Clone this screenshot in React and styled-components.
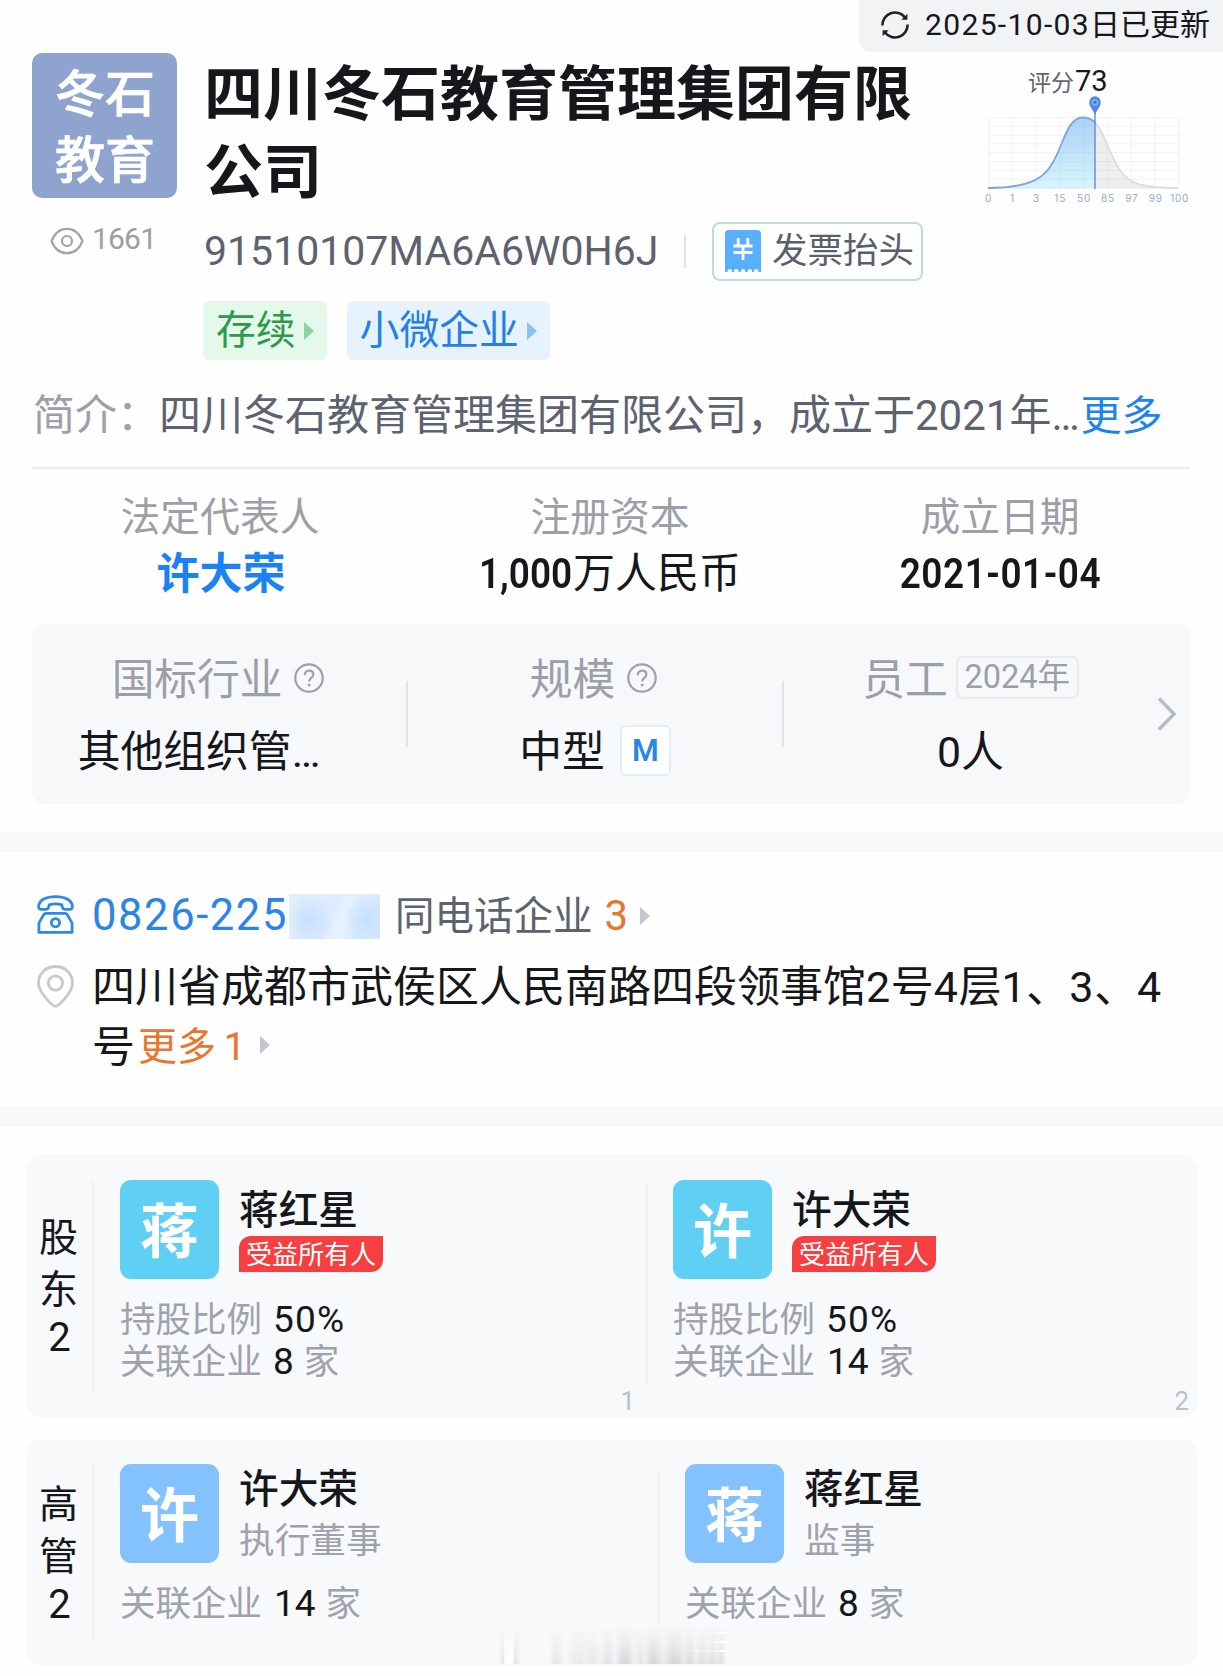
import React from "react";
import styled, { createGlobalStyle } from "styled-components";

const Global = createGlobalStyle`
  *, *::before, *::after { box-sizing: border-box; }
  body {
    margin: 0;
    background: #fff;
    color: #15171b;
    font-family: Roboto, "Noto Sans CJK SC", sans-serif;
  }
`;

const Page = styled.main`
  position: relative;
  width: 1223px;
  height: 1676px;
  overflow: hidden;
  background: #fefefe;
`;

/* ---------- header ---------- */

const TopBar = styled.div`
  display: flex;
  justify-content: flex-end;
  height: 52px;
`;

const UpdateBadge = styled.div`
  display: flex;
  align-items: center;
  gap: 16px;
  width: 364px;
  padding: 0 0 3px 22px;
  border-bottom-left-radius: 12px;
  background: #f2f3f5;
  font-size: 30px;
  line-height: 40px;
  white-space: nowrap;
`;

const Spaced = styled.span`
  letter-spacing: ${(p) => p.$by}px;
`;

const Header = styled.header`
  display: grid;
  grid-template-columns: 145px 1fr 232px;
  column-gap: 26px;
  height: 307px;
  margin: 1px 22px 0 32px;
`;

const Logo = styled.div`
  width: 145px;
  height: 145px;
  padding: 9px 0 0 1px;
  border-radius: 10px;
  background: #8fa3cf;
  color: #fff;
  font-size: 50px;
  font-weight: 500;
  line-height: 66px;
  text-align: center;
  -webkit-text-stroke: 0.7px #fff;
`;

const Views = styled.div`
  display: flex;
  align-items: center;
  gap: 8px;
  margin: 24px 0 0 18px;
  color: #9b9ea6;
  font-size: 30px;
  font-weight: 400;
  letter-spacing: -0.8px;
  line-height: 40px;
`;

const ViewCount = styled.span`
  margin-top: -3px;
`;

const Title = styled.h1`
  width: 720px;
  margin: 0;
  padding: 3px 0 0 1px;
  font-size: 59px;
  font-weight: 700;
  line-height: 78px;
`;

const CodeRow = styled.div`
  display: flex;
  align-items: center;
  height: 59px;
  margin-top: 10px;
`;

const Code = styled.span`
  width: 481px;
  padding: 0 0 2px 1px;
  color: #5d6270;
  font-size: 41px;
  line-height: 50px;
`;

const Rule = styled.i`
  width: 2px;
  height: ${(p) => p.$h}px;
  background: #e1e3e7;
`;

const InvoiceButton = styled.button`
  display: flex;
  align-items: center;
  gap: 11px;
  width: 211px;
  height: 59px;
  margin-left: 26px;
  padding: 0 0 1px 11px;
  border: 2px solid #bcdaec;
  border-radius: 8px;
  background: #fff;
  color: #5a5f6b;
  font: 400 35.5px/48px Roboto, "Noto Sans CJK SC", sans-serif;
  white-space: nowrap;
`;

const TagRow = styled.div`
  display: flex;
  gap: 20px;
  margin-top: 20px;
`;

const Tag = styled.span`
  display: flex;
  align-items: center;
  gap: 8px;
  height: 59px;
  padding: 0 13px 0 13px;
  border-radius: 6px;
  background: ${(p) => p.$bg};
  color: ${(p) => p.$color};
  font-size: 39.8px;
  line-height: 50px;
`;

const Score = styled.div`
  padding-top: 6px;
`;

const ScoreLabel = styled.div`
  display: flex;
  align-items: baseline;
  gap: 1px;
  height: 35px;
  padding-left: 59px;
  color: #5f6472;
  font-size: 23px;
  line-height: 44px;
`;

const ScoreValue = styled.b`
  color: #15171b;
  font-size: 29px;
  font-weight: 400;
`;

/* ---------- intro and stats ---------- */

const Intro = styled.p`
  box-sizing: content-box;
  height: 81px;
  margin: 0 33px 0 32px;
  padding: 26px 0 0 1px;
  border-bottom: 2px solid #ededf0;
  color: #5d6270;
  font-size: 42px;
  line-height: 60px;
  white-space: nowrap;
`;

const Muted = styled.span`
  color: #9c9fa9;
`;

const MoreLink = styled.span`
  margin-left: 1px;
  color: #1d83f0;
  font-size: 41px;
`;

const Stats = styled.section`
  display: grid;
  grid-template-columns: repeat(3, 1fr);
  height: 155px;
  margin: 0 28px 0 25px;
  padding-top: 24px;
  text-align: center;
`;

const StatLabel = styled.div`
  color: #9c9fa8;
  font-size: 39.8px;
  line-height: 50px;
`;

const StatValue = styled.div`
  margin-top: 3px;
  padding-left: ${(p) => (p.$link ? 2 : 0)}px;
  color: ${(p) => (p.$link ? "#1a82f2" : "#15171b")};
  font-size: ${(p) => (p.$link ? 43 : 42)}px;
  font-weight: ${(p) => (p.$link ? 700 : 400)};
  line-height: 56px;
  white-space: nowrap;
`;

const Figures = styled.span`
  display: inline-block;
  margin-right: ${(p) => p.$pull || 0}px;
  font-weight: 600;
  letter-spacing: ${(p) => p.$ls || 0}px;
  transform: scaleX(0.88);
  transform-origin: ${(p) => p.$origin || "left"} center;
`;

const Panel = styled.section`
  display: grid;
  grid-template-columns: 374px 2px 374px 2px 373px 1fr;
  align-items: center;
  height: 180px;
  margin: 0 33px 0 32px;
  border-radius: 12px;
  background: #f7f8fa;
`;

const PanelCell = styled.div`
  display: flex;
  flex-direction: column;
  align-items: center;
  gap: 20px;
  align-self: start;
  padding-top: 31px;
`;

const PanelLabel = styled.div`
  display: flex;
  align-items: center;
  gap: ${(p) => p.$gap}px;
  height: 50px;
  padding-right: ${(p) => p.$shift || 0}px;
  color: #9c9fa8;
  font-size: 42.7px;
  line-height: 50px;

  > svg { margin-bottom: 4px; }
`;

const PanelValue = styled.div`
  display: flex;
  align-items: center;
  gap: 15px;
  height: 56px;
  margin-top: -1px;
  padding-right: ${(p) => p.$shift || 0}px;
  font-size: 42.8px;
  line-height: 56px;
  white-space: nowrap;
`;

const YearTag = styled.span`
  width: 123px;
  height: 43px;
  margin-bottom: 5px;
  border: 2px solid #e9ebee;
  border-radius: 7px;
  font-size: 32.5px;
  line-height: 38px;
  text-align: center;
`;

const SizeBadge = styled.span`
  width: 51px;
  height: 51px;
  margin-bottom: 3px;
  border: 2px solid #e0eefb;
  border-radius: 6px;
  background: #fff;
  color: #2a86e8;
  font-size: 30.5px;
  font-weight: 600;
  line-height: 47px;
  text-align: center;
`;

const Band = styled.div`
  height: 20px;
  margin-top: ${(p) => p.$mt}px;
  background: #f7f8fa;
`;

/* ---------- contacts ---------- */

const Contacts = styled.section`
  height: 226px;
  padding: 34px 37px 0 37px;
`;

const PhoneRow = styled.div`
  display: flex;
  align-items: center;
  height: 60px;
  color: #5d6270;
  font-size: 39.5px;
  line-height: 60px;

  > svg:first-child { margin-bottom: 4px; }
`;

const PhoneNumber = styled.span`
  width: 197px;
  margin: -1px 0 0 18px;
  color: #2a85e6;
  font-size: 43.5px;
  letter-spacing: 1.6px;
`;

const HiddenDigits = styled.span`
  width: 91px;
  height: 45px;
  margin-right: 15px;
  background:
    radial-gradient(ellipse 24px 28px at 20px 26px, #c6dffd, transparent),
    radial-gradient(ellipse 24px 28px at 78px 26px, #c6dffd, transparent),
    linear-gradient(115deg, #e2effd 20%, #dcebfe 45%, #e6f2fe 58%, #d9eafe 80%);
`;

const SamePhone = styled.span`
  margin-top: 1px;
`;

const Orange = styled.span`
  color: #e8772e;
  font-size: ${(p) => p.$size}px;
  margin: ${(p) => p.$m};
  vertical-align: ${(p) => p.$lift || 0}px;
  word-spacing: ${(p) => p.$ws || 0}px;
`;

const AddressRow = styled.div`
  display: grid;
  grid-template-columns: 37px 1fr;
  column-gap: 18px;
  margin-top: 11px;
  font-size: 43px;
  line-height: 60px;

  > svg { margin-top: 8px; }
`;

const InlineArrow = styled.span`
  display: inline-block;
  margin-left: 14px;
  line-height: 0;
  vertical-align: 8px;
`;

/* ---------- people ---------- */

const Card = styled.section`
  display: grid;
  grid-template-columns: 66px 2px ${(p) => p.$first}px 2px 1fr;
  height: ${(p) => p.$h}px;
  margin: ${(p) => p.$mt}px 25px 0 26px;
  border-radius: 18px;
  background: #f7f9fb;
`;

const Side = styled.div`
  display: flex;
  flex-direction: column;
  align-items: center;
  justify-content: center;
  padding-right: 1px;
  font-size: 39px;
  line-height: 52px;
`;

const SideCount = styled.span`
  padding-left: 2px;
  font-size: 40px;
  line-height: 44px;
`;

const CardRule = styled.i`
  margin: ${(p) => p.$m};
  background: #eff1f4;
`;

const Person = styled.article`
  display: flex;
  flex-direction: column;
  padding: ${(p) => p.$p};
`;

const PersonTop = styled.div`
  display: flex;
  gap: 20px;
  height: 99px;
  margin-bottom: 20px;
`;

const Avatar = styled.div`
  width: 99px;
  height: 99px;
  border-radius: 11px;
  background: ${(p) => p.$bg};
  color: #fff;
  font-size: 59px;
  font-weight: 700;
  line-height: 105px;
  text-align: center;
`;

const Name = styled.div`
  margin-top: ${(p) => p.$mt}px;
  font-size: 39.7px;
  font-weight: 500;
  line-height: 48px;
`;

const OwnerTag = styled.div`
  width: 144px;
  height: 36px;
  margin-top: 1px;
  border-radius: 12px 0 12px 0;
  background: #f53f40;
  color: #fff;
  font-size: 26px;
  line-height: 39px;
  text-align: center;
`;

const Role = styled.div`
  margin-top: 4px;
  color: #9fa2ae;
  font-size: 35.7px;
  line-height: 46px;
`;

const Fact = styled.div`
  color: #9fa2ae;
  font-size: 35.5px;
  line-height: 42px;
`;

const FactValue = styled.span`
  margin: 0 10px 0 ${(p) => p.$ml || 11}px;
  color: #15171b;
  font-size: 37px;
  letter-spacing: ${(p) => p.$ls || 0}px;
`;

const PageNo = styled.div`
  align-self: flex-end;
  margin-top: auto;
  color: #bcc0c8;
  font-size: 26px;
  line-height: 30px;
`;

const Smudge = styled.div`
  position: absolute;
  left: 499px;
  top: 1625px;
  width: 228px;
  height: 39px;
  opacity: 0.75;
  background: linear-gradient(
    90deg,
    transparent 0, #dcdddf 4px, #fff 6px, #fff 14px, #d9dadc 16px, transparent 22px,
    transparent 50px, #dfe0e2 56px, #e4e5e7 60px, transparent 66px,
    #eaebed 73px, #e2e3e5 80px, #e9eaec 86px, #e1e2e4 94px, #eeeff1 101px,
    #d8d9db 108px, #dcdddf 111px, #f0f1f3 116px, #cbcccf 123px, #cdced0 129px,
    #eceded 135px, #dcddde 141px, #e9eaeb 146px, #c9cacd 153px, #cfd0d2 158px,
    #e6e7e9 164px, #c8c9cc 174px, #cdced0 180px, #e2e3e5 185px, #cccdcf 191px,
    #e9eaec 197px, #d2d3d5 203px, #e2e3e4 208px, #d6d7d9 213px, #e3e4e6 218px,
    #d3d4d6 222px, transparent 228px
  );
  mask-image: linear-gradient(180deg, transparent 0, rgba(0, 0, 0, 0.35) 40%, #000 100%);
`;

const SmudgeDashes = styled.div`
  position: absolute;
  left: 664px;
  top: 1632px;
  width: 63px;
  height: 21px;
  background: repeating-linear-gradient(180deg, #fff 0 2px, transparent 2px 9px);
  mask-image: linear-gradient(90deg, transparent, rgba(0, 0, 0, 0.3) 80%, #000 92%);
`;

/* ---------- drawings ---------- */

const RefreshIcon = () => (
  <svg width="28" height="28" viewBox="0 0 28 28" fill="none" stroke="#202226" strokeWidth="2.6">
    <path d="M1.4 14.500A12.600 12.600 0 0 1 24 6.500" />
    <path d="M26.600 13.500A12.600 12.600 0 0 1 4 21.500" />
    <path d="M26.400 2.800v6h-6z" fill="#202226" stroke="none" />
    <path d="M1.600 25.200v-6h6z" fill="#202226" stroke="none" />
  </svg>
);

const EyeIcon = () => (
  <svg width="34" height="28" viewBox="0 0 34 28" fill="none" stroke="#a0a3aa" strokeWidth="2.2">
    <path d="M1.5 14C4.600 6.200 10.200 1.800 17 1.800S29.400 6.200 32.500 14C29.400 21.800 23.800 26.200 17 26.200S4.600 21.800 1.500 14z" />
    <circle cx="17" cy="14" r="5" />
  </svg>
);

const InvoiceIcon = () => (
  <svg width="36" height="42" viewBox="0 0 36 42">
    <path
      d="M4 0h28a4 4 0 0 1 4 4v38h-2.500a2.200 2.800 0 0 0-4.600 0h-1.800a2.200 2.800 0 0 0-4.600 0h-2.200a2.200 2.800 0 0 0-4.600 0h-2.200a2.200 2.800 0 0 0-4.600 0h-1.800a2.200 2.800 0 0 0-4.600 0H0V4a4 4 0 0 1 4-4z"
      fill="#58aeff"
    />
    <path d="M13.200 8v8.500M22.800 8v8.500M8.500 16h19M8.500 22.500h19M18 16v14" fill="none" stroke="#fff" strokeWidth="2.800" />
  </svg>
);

const Arrow = ({ color }) => (
  <svg width="10" height="18" viewBox="0 0 10 18">
    <path d="M0 0l10 9-10 9z" fill={color} />
  </svg>
);

const HelpIcon = () => (
  <svg width="30" height="30" viewBox="0 0 30 30" fill="none" stroke="#9ea1a9" strokeWidth="2.200">
    <circle cx="15" cy="15" r="13.700" />
    <path d="M10.800 12.200c0-2.900 1.800-4.600 4.300-4.600s4.200 1.600 4.200 4c0 3.300-4.200 3.300-4.200 7" />
    <circle cx="15.100" cy="22" r="1.500" fill="#9ea1a9" stroke="none" />
  </svg>
);

const Chevron = () => (
  <svg width="20" height="34" viewBox="0 0 20 34" fill="none" stroke="#b7bac1" strokeWidth="3.400">
    <path d="M2 1.500L17 17 2 32.500" />
  </svg>
);

const PhoneIcon = () => (
  <svg width="37" height="39" viewBox="0 0 37 39" fill="none" stroke="#2f88e6" strokeWidth="2.800" strokeLinejoin="round">
    <path d="M1.600 11.300C2.300 5 9.200 1.600 18.500 1.600S34.700 5 35.400 11.300c.2 2-.9 3-2.700 3h-4.400c-1.600 0-2.500-.8-2.900-2.200l-.6-2.300c-3.500-1.100-9.100-1.100-12.600 0l-.6 2.300c-.4 1.400-1.300 2.200-2.900 2.200H4.300c-1.800 0-2.900-1-2.700-3z" />
    <path d="M9 18.400h19c1 0 1.700.4 2.200 1.200l4 6.800c.6 1 .9 1.800.9 3v8H1.900v-8c0-1.200.3-2 .9-3l4-6.800c.5-.8 1.200-1.200 2.200-1.200z" />
    <circle cx="18.500" cy="27.700" r="4.100" />
  </svg>
);

const PinIcon = () => (
  <svg width="37" height="43" viewBox="0 0 37 43" fill="none" stroke="#c6c9d1" strokeWidth="2.800">
    <path d="M18.500 41.300C16 41.300 1.500 28 1.500 17.800 1.500 8.600 9.100 1.500 18.500 1.500s17 7.100 17 16.300C35.500 28 21 41.300 18.500 41.300z" />
    <circle cx="18.500" cy="18" r="7.200" />
  </svg>
);

const ticks = ["0", "1", "3", "15", "50", "85", "97", "99", "100"];

const ChartSvg = styled.svg`
  display: block;
`;

const ScoreChart = () => (
  <ChartSvg width="224" height="110" viewBox="0 0 224 110">
    <defs>
      <linearGradient id="scoreFill" x1="0" y1="0" x2="0" y2="1">
        <stop offset="0" stopColor="#a9d2f8" />
        <stop offset="1" stopColor="#d8f5fe" />
      </linearGradient>
    </defs>
    <path
      d="M126.500 29C133 36 136.500 47 141 57 150 77 157 87 171 90.500 182 93.500 193 94 209 94V94.500H126.500z"
      fill="#eeeeee"
    />
    <path
      d="M19 94C40 94 59 92 72 82.500 94 66 94 24 113.500 23.500 120 23.500 124 26 126.500 29V94.500H19z"
      fill="url(#scoreFill)"
    />
    <g stroke="#8a98a8" strokeOpacity="0.100" strokeWidth="1">
      {ticks.map((t, i) => (
        <path key={t} d={`M${19.5 + i * 23.8} 23.500V94`} />
      ))}
      {ticks.map((t, i) => (
        <path key={t} d={`M19.500 ${23.5 + i * 8.8}H210`} />
      ))}
    </g>
    <path
      d="M126.500 29C133 36 136.500 47 141 57 150 77 157 87 171 90.500 182 93.500 193 94 209 94"
      fill="none"
      stroke="#dadada"
      strokeWidth="1.500"
    />
    <path
      d="M19 94C40 94 59 92 72 82.500 94 66 94 24 113.500 23.500 120 23.500 124 26 126.500 29"
      fill="none"
      stroke="#7fa6dc"
      strokeWidth="1.800"
    />
    <path d="M126 15V95" stroke="#6b90cd" strokeWidth="1.500" />
    <path d="M126 20.500C124 16 120.300 12.500 120.300 8.500a5.700 6.200 0 0 1 11.400 0C131.700 12.500 128 16 126 20.500z" fill="#4a86ee" />
    <circle cx="126" cy="8.300" r="3.600" fill="#76aaf8" />
    <circle cx="126" cy="8.300" r="1.400" fill="#2f68d8" />
    <g fill="#94a9cf" fontSize="10" fontFamily="Inter, sans-serif" textAnchor="middle" letterSpacing="0.800">
      {ticks.map((t, i) => (
        <text key={t} x={19.5 + i * 23.9} y="108">
          {t}
        </text>
      ))}
    </g>
  </ChartSvg>
);

/* ---------- data ---------- */

const shareholders = [
  { name: "蒋红星", share: "50%", firms: "8" },
  { name: "许大荣", share: "50%", firms: "14" },
];

const executives = [
  { name: "许大荣", role: "执行董事", firms: "14" },
  { name: "蒋红星", role: "监事", firms: "8" },
];

const Firms = ({ count }) => (
  <Fact>
    关联企业
    <FactValue $ml={count.length > 1 ? 12 : 11}>{count}</FactValue>家
  </Fact>
);

export default function App() {
  return (
    <Page>
      <Global />
      <TopBar>
        <UpdateBadge>
          <RefreshIcon />
          <span>
            <Spaced $by={1.35}>2025-10-03</Spaced>日已更新
          </span>
        </UpdateBadge>
      </TopBar>

      <Header>
        <div>
          <Logo>
            冬石
            <br />
            教育
          </Logo>
          <Views>
            <EyeIcon />
            <ViewCount>1661</ViewCount>
          </Views>
        </div>
        <div>
          <Title>四川冬石教育管理集团有限公司</Title>
          <CodeRow>
            <Code>91510107MA6A6W0H6J</Code>
            <Rule $h={33} />
            <InvoiceButton>
              <InvoiceIcon />
              发票抬头
            </InvoiceButton>
          </CodeRow>
          <TagRow>
            <Tag $bg="#e4f9eb" $color="#2c9a4a">
              存续
              <Arrow color="#8ed0a2" />
            </Tag>
            <Tag $bg="#e6f2fd" $color="#2380e6">
              小微企业
              <Arrow color="#88c0f9" />
            </Tag>
          </TagRow>
        </div>
        <Score>
          <ScoreLabel>
            评分<ScoreValue>73</ScoreValue>
          </ScoreLabel>
          <ScoreChart />
        </Score>
      </Header>

      <Intro>
        <Muted>简介：</Muted>四川冬石教育管理集团有限公司，成立于2021年…
        <MoreLink>更多</MoreLink>
      </Intro>

      <Stats>
        <div>
          <StatLabel>法定代表人</StatLabel>
          <StatValue $link>许大荣</StatValue>
        </div>
        <div>
          <StatLabel>注册资本</StatLabel>
          <StatValue>
            <Figures $pull={-12}>1,000</Figures>万人民币
          </StatValue>
        </div>
        <div>
          <StatLabel>成立日期</StatLabel>
          <StatValue>
            <Figures $ls={0.6} $origin="center">2021-01-04</Figures>
          </StatValue>
        </div>
      </Stats>

      <Panel>
        <PanelCell>
          <PanelLabel $gap={12} $shift={2}>
            国标行业
            <HelpIcon />
          </PanelLabel>
          <PanelValue $shift={40}>其他组织管…</PanelValue>
        </PanelCell>
        <Rule $h={66} />
        <PanelCell>
          <PanelLabel $gap={12} $shift={3}>
            规模
            <HelpIcon />
          </PanelLabel>
          <PanelValue>
            中型
            <SizeBadge>M</SizeBadge>
          </PanelValue>
        </PanelCell>
        <Rule $h={66} />
        <PanelCell>
          <PanelLabel $gap={8}>
            员工
            <YearTag>2024年</YearTag>
          </PanelLabel>
          <PanelValue>0人</PanelValue>
        </PanelCell>
        <Chevron />
      </Panel>

      <Band $mt={28} />

      <Contacts>
        <PhoneRow>
          <PhoneIcon />
          <PhoneNumber>0826-225</PhoneNumber>
          <HiddenDigits />
          <SamePhone>同电话企业</SamePhone>
          <Orange $size={42} $m="0 12px 0 12px">3</Orange>
          <Arrow color="#c3c6cf" />
        </PhoneRow>
        <AddressRow>
          <PinIcon />
          <span>
            四川省成都市武侯区人民南路四段领事馆<Spaced $by={0.6}>2</Spaced>号<Spaced $by={0.6}>4</Spaced>层
            <Spaced $by={0.6}>1</Spaced>、<Spaced $by={0.6}>3</Spaced>、4
            <br />号<Orange $size={39} $m="0 0 0 3px" $lift={2} $ws={-2}>更多 1</Orange>
            <InlineArrow>
              <Arrow color="#c3c6cf" />
            </InlineArrow>
          </span>
        </AddressRow>
      </Contacts>

      <Band $mt={29} />

      <Card $h={264} $mt={27} $first={552}>
        <Side>
          <span>股</span>
          <span>东</span>
          <SideCount>2</SideCount>
        </Side>
        <CardRule $m="26px 0 27px" />
        {shareholders.map((p, i) => (
          <React.Fragment key={p.name}>
            {i > 0 && <CardRule $m="30px 0 33px" />}
            <Person $p={i ? "26px 9px 2px 25px" : "26px 11px 2px 26px"}>
              <PersonTop>
                <Avatar $bg="#5fcff3">{p.name[0]}</Avatar>
                <div>
                  <Name $mt={7}>{p.name}</Name>
                  <OwnerTag>受益所有人</OwnerTag>
                </div>
              </PersonTop>
              <Fact>
                持股比例
                <FactValue $ls={1.2}>{p.share}</FactValue>
              </Fact>
              <Firms count={p.firms} />
              <PageNo>{i + 1}</PageNo>
            </Person>
          </React.Fragment>
        ))}
      </Card>

      <Card $h={227} $mt={21} $first={564}>
        <Side>
          <span>高</span>
          <span>管</span>
          <SideCount>2</SideCount>
        </Side>
        <CardRule $m="25px 0 26px" />
        {executives.map((p, i) => (
          <React.Fragment key={p.name}>
            {i > 0 && <CardRule $m="33px 0 42px" />}
            <Person $p={i ? "25px 9px 0 25px" : "25px 9px 0 26px"}>
              <PersonTop>
                <Avatar $bg="#84c2ff">{p.name[0]}</Avatar>
                <div>
                  <Name $mt={2}>{p.name}</Name>
                  <Role>{p.role}</Role>
                </div>
              </PersonTop>
              <Firms count={p.firms} />
            </Person>
          </React.Fragment>
        ))}
      </Card>

      <Smudge />
      <SmudgeDashes />
    </Page>
  );
}
